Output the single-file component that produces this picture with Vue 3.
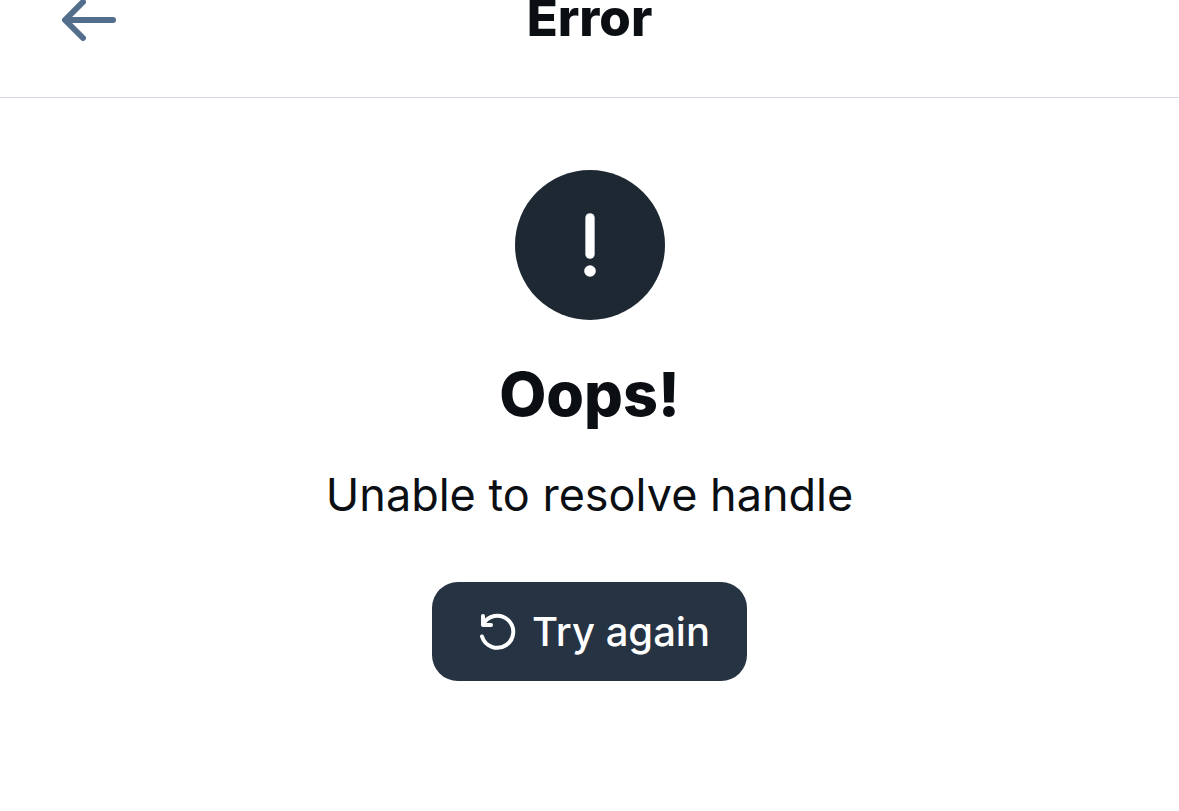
<script setup>
const retry = () => window.location.reload()
const goBack = () => window.history.back()
</script>

<template>
  <div class="screen">
    <header class="bar">
      <button class="back" type="button" aria-label="Go back" @click="goBack">
        <svg width="54" height="44" viewBox="0 0 54 44" fill="none" stroke="currentColor" stroke-width="6" stroke-linecap="round" stroke-linejoin="round">
          <path d="M51 22H4M21 4L3 22l18 18" />
        </svg>
      </button>
      <h1 class="title">Error</h1>
    </header>
    <main class="content">
      <svg class="badge" width="150" height="150" viewBox="0 0 150 150" aria-hidden="true">
        <circle cx="75" cy="75" r="75" fill="#1e2832" />
        <path d="M75 47.8v36.4" stroke="#fff" stroke-width="9.3" stroke-linecap="round" />
        <circle cx="75" cy="101" r="5.8" fill="#fff" />
      </svg>
      <h2 class="heading">Oops!</h2>
      <p class="message">Unable to resolve handle</p>
      <button class="retry" type="button" @click="retry">
        <svg width="38" height="38" viewBox="0 0 38 38" fill="none" stroke="currentColor" stroke-width="4" stroke-linecap="round" stroke-linejoin="round" aria-hidden="true">
          <path d="M4 3v9h8M4 11.500A16 16 0 1 1 3 23.500" />
        </svg>
        <span>Try again</span>
      </button>
    </main>
  </div>
</template>

<style>
body {
  background: #fff;
  overflow: hidden;
}
</style>

<style scoped>
.screen {
  color: #0b0f14;
  font-family: Inter, "Liberation Sans", sans-serif;
}
.bar {
  display: grid;
  grid-template-columns: 54px 1fr 54px;
  align-items: start;
  height: 97px;
  padding: 0 62px;
  border-bottom: 1px solid #d4dbe2;
  box-sizing: content-box;
}
.back {
  margin: -2px 0 0;
  padding: 0;
  border: 0;
  background: none;
  color: #526e8c;
}
.back svg {
  display: block;
}
.title {
  margin: -12px 0 0;
  font-size: 51px;
  line-height: 60px;
  font-weight: 800;
  text-align: center;
}
.content {
  display: flex;
  flex-direction: column;
  align-items: center;
  padding: 72px 24px;
}
.heading {
  margin: 38px 0 0;
  font-size: 61px;
  line-height: 72px;
  font-weight: 800;
}
.message {
  margin: 37px 0 0;
  font-size: 45px;
  line-height: 56px;
}
.retry {
  display: flex;
  align-items: center;
  gap: 15px;
  margin-top: 59px;
  padding: 25px 37px 25px 47px;
  border: 0;
  border-radius: 26px;
  background: #263343;
  color: #fff;
  font-family: inherit;
  font-size: 40px;
  line-height: 49px;
  font-weight: 500;
}
</style>
